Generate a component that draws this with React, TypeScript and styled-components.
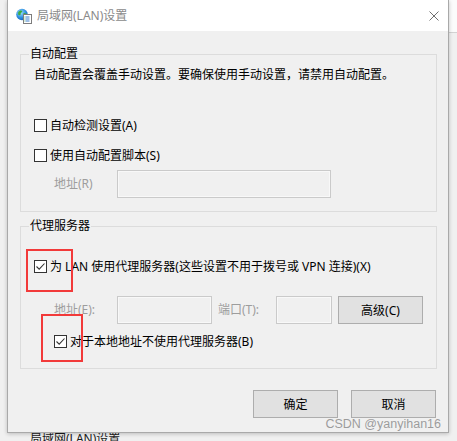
import styled, { createGlobalStyle } from 'styled-components';

const uiFont = `"Segoe UI", "Noto Sans", "Noto Sans CJK SC", sans-serif`;

const GlobalStyle = createGlobalStyle`
  html, body {
    margin: 0;
    padding: 0;
    background: #f0f0f0;
  }
  body {
    font-family: ${uiFont};
    font-size: 12px;
    color: #000;
  }
  * {
    box-sizing: border-box;
  }
`;

const Desktop = styled.div`
  position: relative;
  width: 457px;
  height: 441px;
  overflow: hidden;
  background: #f0f0f0;
  display: flex;
  flex-direction: column;
`;

const BackHeader = styled.div`
  margin-left: 449px;
  height: 33px;
  background: #fbfbfb;
  border-bottom: 1px solid #d2d2d2;
`;

const BackTitle = styled.div`
  margin-top: auto;
  margin-bottom: -6px;
  padding-left: 30px;
  height: 16px;
  line-height: 16px;
  color: #1a1a1a;
`;

const Dialog = styled.div`
  position: absolute;
  left: 7px;
  top: 0;
  width: 442px;
  height: 433px;
  background: #f0f0f0;
  border: 1px solid #a9a9a9;
  border-top: none;
  box-shadow: 0 1px 4px rgba(0, 0, 0, 0.22);
  display: flex;
  flex-direction: column;
`;

const TitleBar = styled.div`
  height: 31px;
  background: #ffffff;
  display: flex;
  align-items: center;
  padding: 0 9px 0 8px;
`;

const TitleText = styled.span`
  margin-left: 5px;
  color: #8a8a8a;
  line-height: 16px;
  flex: 1;
`;

const Body = styled.div`
  padding: 23px 11px 0 12px;
  display: flex;
  flex-direction: column;
`;

const Group = styled.div<{ $pad: string; $mt?: number }>`
  position: relative;
  border: 1px solid #dcdcdc;
  padding: ${(p) => p.$pad};
  margin-top: ${(p) => p.$mt ?? 0}px;
  display: flex;
  flex-direction: column;
`;

const GroupTitle = styled.span`
  position: absolute;
  top: -9px;
  left: 8px;
  padding: 0 1px;
  line-height: 16px;
  background: #f0f0f0;
`;

const Desc = styled.div`
  line-height: 20px;
  height: 20px;
  white-space: nowrap;
`;

const CheckRow = styled.label<{ $mt?: number; $indent?: number }>`
  display: flex;
  align-items: center;
  height: 20px;
  margin-top: ${(p) => p.$mt ?? 0}px;
  padding-left: ${(p) => p.$indent ?? 0}px;
  white-space: nowrap;
`;

const Box = styled.span`
  width: 13px;
  height: 13px;
  border: 1px solid #333333;
  background: #ffffff;
  display: inline-flex;
  align-items: center;
  justify-content: center;
  margin-right: 3px;
  flex-shrink: 0;
`;

const FieldRow = styled.div<{ $mt?: number }>`
  display: flex;
  align-items: center;
  height: 28px;
  margin-top: ${(p) => p.$mt ?? 0}px;
  padding-left: 20px;
`;

const FieldLabel = styled.span<{ $w: number; $ml?: number }>`
  width: ${(p) => p.$w}px;
  margin-left: ${(p) => p.$ml ?? 0}px;
  color: #9d9d9d;
  line-height: 28px;
  white-space: nowrap;
`;

const Field = styled.input<{ $w: number }>`
  width: ${(p) => p.$w}px;
  height: 28px;
  border: 1px solid #cacaca;
  background: #f0f0f0;
  box-shadow: inset 0 0 0 1px #f8f8f8;
  padding: 0;
  margin: 0;
  outline: none;
`;

const Button = styled.button<{ $w: number; $ml?: number }>`
  width: ${(p) => p.$w}px;
  height: 28px;
  margin-left: ${(p) => p.$ml ?? 0}px;
  background: #e1e1e1;
  border: 1px solid #adadad;
  font-family: ${uiFont};
  font-size: 12px;
  color: #000;
  padding: 0;
`;

const Footer = styled.div`
  margin-top: 21px;
  padding-right: 1px;
  display: flex;
  justify-content: flex-end;
  gap: 13px;
`;

const Highlight = styled.div<{ $l: number; $t: number; $w: number; $h: number }>`
  position: absolute;
  left: ${(p) => p.$l}px;
  top: ${(p) => p.$t}px;
  width: ${(p) => p.$w}px;
  height: ${(p) => p.$h}px;
  border: 2px solid #f23a3a;
  pointer-events: none;
`;

const Watermark = styled.div`
  position: absolute;
  right: 16px;
  top: 417px;
  font-family: "Liberation Sans", Arial, sans-serif;
  font-size: 12.5px;
  line-height: 14px;
  color: rgba(140, 140, 140, 0.85);
`;

const AppIcon = () => (
  <svg width="16" height="16" viewBox="0 0 16 16">
    <defs>
      <radialGradient id="globe" cx="0.4" cy="0.35" r="0.7">
        <stop offset="0" stopColor="#9fe0ff" />
        <stop offset="0.6" stopColor="#2e8fe0" />
        <stop offset="1" stopColor="#155fb5" />
      </radialGradient>
    </defs>
    <circle cx="6" cy="6.5" r="5.8" fill="url(#globe)" />
    <path d="M2.2 4.2 C3.5 2.4 5.5 2 6.4 3.2 C6 4.6 4.4 4.6 4.6 6.2 C4.8 7.6 3 7.6 2.1 6.6 Z" fill="#3fae3f" />
    <path d="M7.4 5.2 C8.8 4.8 10.8 5.6 11.2 7 C10.6 8.6 9 8.2 8.2 9.4 C7.4 8.4 8.2 7 7.4 5.2 Z" fill="#3fae3f" />
    <rect x="7.5" y="6.5" width="8" height="9" fill="#ffffff" stroke="#7d7d7d" strokeWidth="1" />
    <path d="M9.5 9h4M9.5 11h4M9.5 13h4" stroke="#3a7fcf" strokeWidth="1" />
    <path d="M8.6 9h0.6M8.6 11h0.6M8.6 13h0.6" stroke="#3fae3f" strokeWidth="1" />
  </svg>
);

const CloseIcon = () => (
  <svg width="10" height="10" viewBox="0 0 10 10">
    <path d="M0.5 0.5L9.5 9.5M9.5 0.5L0.5 9.5" stroke="#707070" strokeWidth="1" />
  </svg>
);

const Check = ({ checked, label, mt, indent }: { checked?: boolean; label: string; mt?: number; indent?: number }) => (
  <CheckRow $mt={mt} $indent={indent}>
    <Box>
      {checked && (
        <svg width="11" height="11" viewBox="0 0 11 11">
          <path d="M1.5 5.5L4.2 8.2L9.5 2.5" fill="none" stroke="#333333" strokeWidth="1.1" />
        </svg>
      )}
    </Box>
    {label}
  </CheckRow>
);

export default function App() {
  return (
    <>
      <GlobalStyle />
      <Desktop>
        <BackHeader />
        <BackTitle>局域网(LAN)设置</BackTitle>
        <Dialog>
          <TitleBar>
            <AppIcon />
            <TitleText>局域网(LAN)设置</TitleText>
            <CloseIcon />
          </TitleBar>
          <Body>
            <Group $pad="10px 0 13px 13px">
              <GroupTitle>自动配置</GroupTitle>
              <Desc>自动配置会覆盖手动设置。要确保使用手动设置，请禁用自动配置。</Desc>
              <Check label="自动检测设置(A)" mt={30} />
              <Check label="使用自动配置脚本(S)" mt={10} />
              <FieldRow $mt={5}>
                <FieldLabel $w={63}>地址(R)</FieldLabel>
                <Field $w={214} disabled />
              </FieldRow>
            </Group>
            <Group $pad="29px 0 17px 13px" $mt={14}>
              <GroupTitle>代理服务器</GroupTitle>
              <Check checked label="为 LAN 使用代理服务器(这些设置不用于拨号或 VPN 连接)(X)" />
              <FieldRow $mt={20}>
                <FieldLabel $w={63}>地址(E):</FieldLabel>
                <Field $w={95} disabled />
                <FieldLabel $w={58} $ml={6}>端口(T):</FieldLabel>
                <Field $w={56} disabled />
                <Button $w={85} $ml={6}>高级(C)</Button>
              </FieldRow>
              <Check checked label="对于本地地址不使用代理服务器(B)" mt={7} indent={20} />
              <Highlight $l={5} $t={22} $w={47} $h={43} />
              <Highlight $l={20} $t={87} $w={42} $h={48} />
            </Group>
            <Footer>
              <Button $w={85}>确定</Button>
              <Button $w={85}>取消</Button>
            </Footer>
          </Body>
        </Dialog>
        <Watermark>CSDN @yanyihan16</Watermark>
      </Desktop>
    </>
  );
}
